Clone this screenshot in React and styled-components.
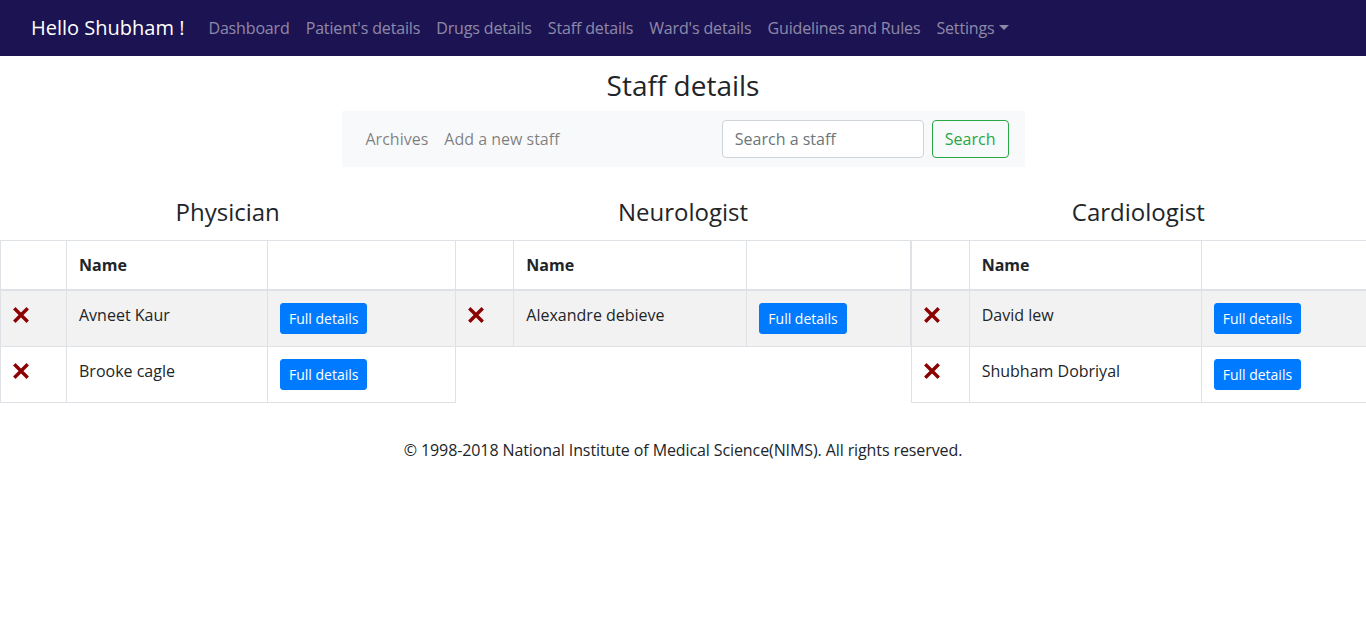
import React from 'react'
import styled, {createGlobalStyle} from 'styled-components'

const GlobalStyle = createGlobalStyle`
  body {
    margin: 0;
    font-family: "Open Sans", "Liberation Sans", sans-serif;
    font-size: 16px;
    line-height: 1.5;
    color: #212529;
    background: #fff;
  }
  * { box-sizing: border-box; }
`

const TopBar = styled.nav`
  height: 56px;
  background-color: #1c1352;
  display: flex;
  align-items: center;
  padding: 0 31px;
`

const Brand = styled.a`
  color: #fff;
  font-size: 20px;
  line-height: 30px;
  margin-right: 16px;
  white-space: nowrap;
`

const NavLinks = styled.div`
  display: flex;
  align-items: center;
`

const NavLink = styled.a`
  color: rgba(255, 255, 255, 0.5);
  padding: 8px 8px;
  letter-spacing: -0.15px;
  white-space: nowrap;
  cursor: pointer;
`

const Caret = styled.span`
  display: inline-block;
  margin-left: 4px;
  vertical-align: 4px;
  border-top: 5px solid;
  border-right: 5px solid transparent;
  border-left: 5px solid transparent;
`

const PageTitle = styled.h3`
  margin: 13px 0 8px;
  font-size: 28px;
  font-weight: 400;
  line-height: 1.2;
  text-align: center;
`

const SubBar = styled.div`
  width: 683px;
  height: 56px;
  margin: 0 auto;
  background-color: #f8f9fa;
  display: flex;
  align-items: center;
  padding: 0 16px;
`

const SubLink = styled.a`
  color: rgba(0, 0, 0, 0.5);
  padding: 8px;
  white-space: nowrap;
`

const SearchForm = styled.form`
  margin-left: auto;
  display: flex;
  align-items: center;
`

const SearchInput = styled.input`
  width: 202px;
  height: 38px;
  padding: 6px 12px;
  font: inherit;
  color: #495057;
  border: 1px solid #ced4da;
  border-radius: 4px;
  margin-right: 8px;
  &::placeholder { color: #6c757d; }
`

const OutlineButton = styled.button`
  height: 38px;
  padding: 6px 12px;
  font: inherit;
  color: #28a745;
  background: transparent;
  border: 1px solid #28a745;
  border-radius: 4px;
`

const Columns = styled.div`
  display: grid;
  grid-template-columns: repeat(3, 1fr);
  align-items: start;
  padding-top: 31px;
`

const Column = styled.section`
  min-width: 0;
`

const ColumnTitle = styled.h4`
  margin: 0 0 14px;
  font-size: 24px;
  font-weight: 400;
  line-height: 1.2;
  text-align: center;
`

const Table = styled.table`
  width: 100%;
  border-collapse: collapse;
  table-layout: fixed;
  border: 1px solid #dee2e6;
`

const Th = styled.th`
  padding: 12px;
  text-align: left;
  font-weight: 700;
  border: 1px solid #dee2e6;
  border-bottom: 2px solid #dee2e6;
  vertical-align: bottom;
`

const Tr = styled.tr`
  background-color: ${p => (p.$striped ? 'rgba(0, 0, 0, 0.05)' : 'transparent')};
`

const Td = styled.td`
  padding: 12px;
  border: 1px solid #dee2e6;
  vertical-align: top;
  white-space: nowrap;
  overflow: hidden;
`

const DetailsButton = styled.button`
  height: 31px;
  padding: 4px 8px;
  font: inherit;
  font-size: 14px;
  line-height: 1.5;
  color: #fff;
  background-color: #007bff;
  border: 1px solid #007bff;
  border-radius: 3px;
`

const RemoveIcon = styled.svg`
  display: block;
  margin-top: 4px;
`

const Footer = styled.footer`
  text-align: center;
  margin-top: 35px;
  letter-spacing: -0.1px;
`

const Cross = () => (
  <RemoveIcon width='16' height='16' viewBox='0 0 16 16'>
    <path d='M2.5 2.5 L13.5 13.5 M13.5 2.5 L2.5 13.5' stroke='#8b0000' strokeWidth='3.4' strokeLinecap='square' />
  </RemoveIcon>
)

const groups = [
  {title: 'Physician', widths: [66, 201, 188], staff: ['Avneet Kaur', 'Brooke cagle']},
  {title: 'Neurologist', widths: [58, 233, 164], staff: ['Alexandre debieve']},
  {title: 'Cardiologist', widths: [58, 232, 165], staff: ['David lew', 'Shubham Dobriyal']}
]

const StaffTable = ({title, widths, staff}) => (
  <Column>
    <ColumnTitle>{title}</ColumnTitle>
    <Table>
      <colgroup>
        {widths.map((w, i) => <col key={i} style={{width: w}} />)}
      </colgroup>
      <thead>
        <tr>
          <Th />
          <Th>Name</Th>
          <Th />
        </tr>
      </thead>
      <tbody>
        {staff.map((name, i) => (
          <Tr key={name} $striped={i % 2 === 0}>
            <Td><Cross /></Td>
            <Td>{name}</Td>
            <Td><DetailsButton>Full details</DetailsButton></Td>
          </Tr>
        ))}
      </tbody>
    </Table>
  </Column>
)

export default function App () {
  return (
    <>
      <GlobalStyle />
      <TopBar>
        <Brand>Hello Shubham !</Brand>
        <NavLinks>
          <NavLink>Dashboard</NavLink>
          <NavLink>Patient's details</NavLink>
          <NavLink>Drugs details</NavLink>
          <NavLink>Staff details</NavLink>
          <NavLink>Ward's details</NavLink>
          <NavLink>Guidelines and Rules</NavLink>
          <NavLink>Settings<Caret /></NavLink>
        </NavLinks>
      </TopBar>
      <PageTitle>Staff details</PageTitle>
      <SubBar>
        <SubLink>Archives</SubLink>
        <SubLink>Add a new staff</SubLink>
        <SearchForm onSubmit={e => e.preventDefault()}>
          <SearchInput placeholder='Search a staff' />
          <OutlineButton type='submit'>Search</OutlineButton>
        </SearchForm>
      </SubBar>
      <Columns>
        {groups.map(g => <StaffTable key={g.title} {...g} />)}
      </Columns>
      <Footer>© 1998-2018 National Institute of Medical Science(NIMS). All rights reserved.</Footer>
    </>
  )
}
